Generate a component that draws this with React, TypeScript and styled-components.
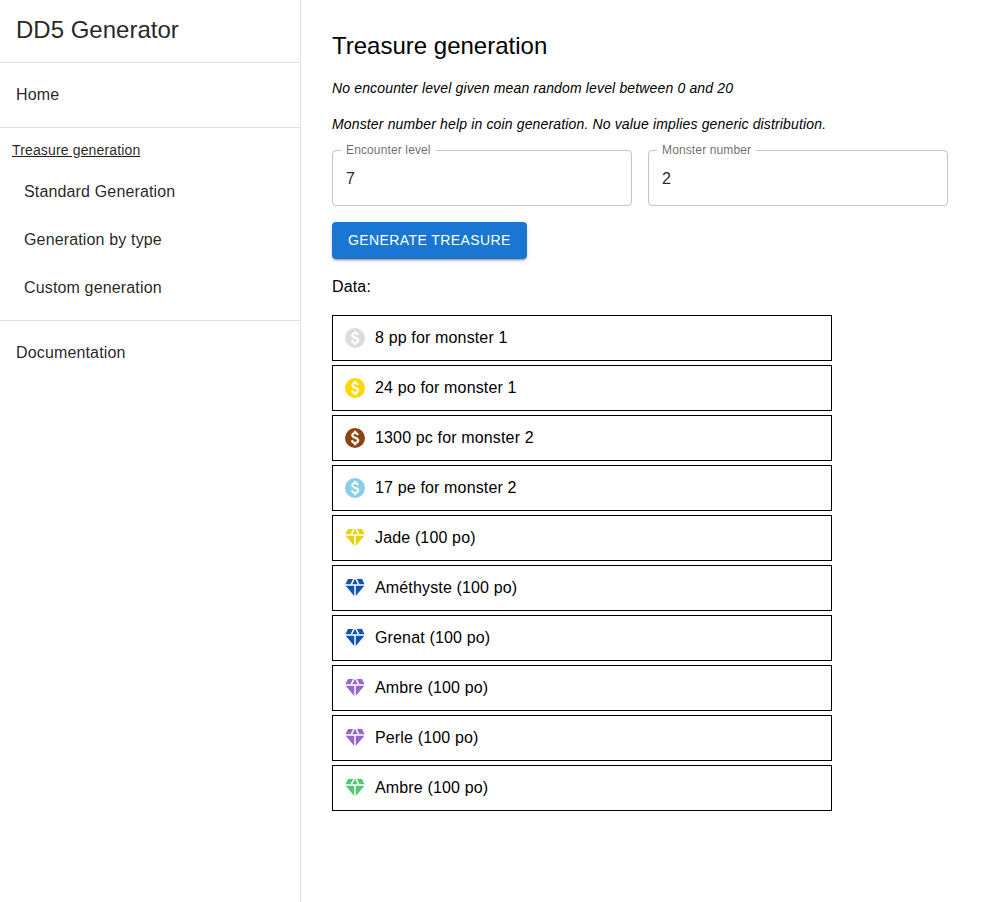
import React from "react";
import styled, { createGlobalStyle } from "styled-components";

const GlobalStyle = createGlobalStyle`
  *, *::before, *::after { box-sizing: border-box; }
  body {
    margin: 0;
    background: #fff;
    color: #000;
    font-family: "Liberation Sans", Arial, sans-serif;
    font-size: 16px;
  }
`;

const Page = styled.div`
  display: flex;
  min-height: 902px;
`;

const Sidebar = styled.nav`
  width: 301px;
  flex: none;
  border-right: 1px solid rgba(0, 0, 0, 0.12);
  color: rgba(0, 0, 0, 0.87);
`;

const Brand = styled.div`
  height: 62px;
  padding: 14px 16px;
  font-size: 24px;
  line-height: 32px;
`;

const Divider = styled.hr`
  margin: 0;
  border: 0;
  border-top: 1px solid rgba(0, 0, 0, 0.12);
`;

const NavList = styled.ul`
  margin: 0;
  padding: 8px 0;
  list-style: none;
`;

const NavItem = styled.li<{ $nested?: boolean }>`
  height: 48px;
  padding: 12px ${(p) => (p.$nested ? 24 : 16)}px;
  line-height: 24px;
  letter-spacing: 0.15px;
`;

const NavHeading = styled.div`
  height: 40px;
  padding: 12px 12px 0;
  font-size: 14px;
  line-height: 20px;
  letter-spacing: 0.15px;
  text-decoration: underline;
`;

const NestedList = styled.ul`
  margin: 0;
  padding: 0 0 8px;
  list-style: none;
`;

const Main = styled.main`
  flex: 1;
  padding: 30px 31px;
`;

const Title = styled.h1`
  margin: 0;
  font-size: 24px;
  font-weight: 400;
  line-height: 32px;
`;

const Hint = styled.p`
  margin: 16px 0 0;
  font-size: 14px;
  font-style: italic;
  line-height: 20px;
  letter-spacing: 0.15px;
`;

const Fields = styled.div`
  display: flex;
  gap: 16px;
  margin-top: 8px;
`;

const Field = styled.fieldset`
  width: 300px;
  height: 64px;
  margin: 0;
  padding: 0 8px;
  border: 1px solid rgba(0, 0, 0, 0.23);
  border-radius: 4px;
`;

const FieldLabel = styled.legend`
  padding: 0 5px;
  font-size: 12px;
  line-height: 16px;
  letter-spacing: 0.13px;
  color: rgba(0, 0, 0, 0.6);
`;

const FieldInput = styled.input`
  display: block;
  width: 100%;
  height: 23px;
  margin-top: 9px;
  padding: 0 5px;
  border: 0;
  outline: 0;
  background: none;
  color: rgba(0, 0, 0, 0.87);
  font: inherit;
`;

const Button = styled.button`
  display: block;
  height: 37px;
  margin-top: 16px;
  padding: 0 16px 2px;
  border: 0;
  border-radius: 4px;
  background: #1976d2;
  color: #fff;
  font-family: inherit;
  font-size: 14px;
  letter-spacing: 0.4px;
  text-transform: uppercase;
  box-shadow: 0 3px 1px -2px rgba(0, 0, 0, 0.2), 0 2px 2px 0 rgba(0, 0, 0, 0.14),
    0 1px 5px 0 rgba(0, 0, 0, 0.12);
`;

const DataLabel = styled.p`
  margin: 16px 0;
  line-height: 24px;
  letter-spacing: 0.15px;
`;

const Results = styled.ul`
  display: flex;
  flex-direction: column;
  gap: 4px;
  width: 500px;
  margin: 0;
  padding: 0;
  list-style: none;
`;

const Result = styled.li`
  display: flex;
  align-items: center;
  gap: 8px;
  height: 46px;
  padding: 0 10px;
  border: 1px solid #000;
  line-height: 24px;
  letter-spacing: 0.15px;
`;

const Icon = styled.svg<{ $color: string }>`
  width: 24px;
  height: 24px;
  fill: ${(p) => p.$color};
`;

const DollarMark = styled.path`
  fill: #fff;
  stroke: #fff;
  stroke-width: 0.5px;
`;

const Coin = () => (
  <>
    <circle cx="12" cy="12" r="10" />
    <DollarMark d="M12.88 17.76V19h-1.75v-1.29c-.74-.18-2.39-.77-3.02-2.96l1.65-.67c.06.22.58 2.09 2.4 2.09.93 0 1.98-.48 1.98-1.61 0-.96-.7-1.46-2.28-2.03-1.1-.39-3.35-1.03-3.35-3.31 0-.1.01-2.4 2.62-2.96V5h1.75v1.24c1.84.32 2.51 1.79 2.66 2.23l-1.58.67c-.11-.35-.59-1.34-1.9-1.34-.7 0-1.81.37-1.81 1.39 0 .95.86 1.31 2.64 1.9 2.4.83 3.01 2.05 3.01 3.45 0 2.63-2.5 3.13-3.02 3.22z" />
  </>
);

const Gem = () => (
  <path d="M12.16 3h-.32L9.21 8.25h5.58zm4.3 5.25h5.16L19 3h-5.16zm4.92 1.5h-8.63V20.1zM11.25 20.1V9.75H2.62zM7.54 8.25 10.16 3H5L2.38 8.25z" />
);

const loot = [
  { Shape: Coin, color: "#dcdcdc", text: "8 pp for monster 1" },
  { Shape: Coin, color: "#ffd700", text: "24 po for monster 1" },
  { Shape: Coin, color: "#8b4513", text: "1300 pc for monster 2" },
  { Shape: Coin, color: "#87ceeb", text: "17 pe for monster 2" },
  { Shape: Gem, color: "#e6d20f", text: "Jade (100 po)" },
  { Shape: Gem, color: "#0f52ba", text: "Améthyste (100 po)" },
  { Shape: Gem, color: "#0f52ba", text: "Grenat (100 po)" },
  { Shape: Gem, color: "#9966cc", text: "Ambre (100 po)" },
  { Shape: Gem, color: "#9966cc", text: "Perle (100 po)" },
  { Shape: Gem, color: "#50c878", text: "Ambre (100 po)" },
];

export default function App() {
  return (
    <>
      <GlobalStyle />
      <Page>
        <Sidebar>
          <Brand>DD5 Generator</Brand>
          <Divider />
          <NavList>
            <NavItem>Home</NavItem>
          </NavList>
          <Divider />
          <NavHeading>Treasure generation</NavHeading>
          <NestedList>
            <NavItem $nested>Standard Generation</NavItem>
            <NavItem $nested>Generation by type</NavItem>
            <NavItem $nested>Custom generation</NavItem>
          </NestedList>
          <Divider />
          <NavList>
            <NavItem>Documentation</NavItem>
          </NavList>
        </Sidebar>
        <Main>
          <Title>Treasure generation</Title>
          <Hint>No encounter level given mean random level between 0 and 20</Hint>
          <Hint>Monster number help in coin generation. No value implies generic distribution.</Hint>
          <Fields>
            <Field>
              <FieldLabel>Encounter level</FieldLabel>
              <FieldInput defaultValue="7" />
            </Field>
            <Field>
              <FieldLabel>Monster number</FieldLabel>
              <FieldInput defaultValue="2" />
            </Field>
          </Fields>
          <Button>Generate treasure</Button>
          <DataLabel>Data:</DataLabel>
          <Results>
            {loot.map(({ Shape, color, text }, i) => (
              <Result key={i}>
                <Icon $color={color} viewBox="0 0 24 24">
                  <Shape />
                </Icon>
                {text}
              </Result>
            ))}
          </Results>
        </Main>
      </Page>
    </>
  );
}
